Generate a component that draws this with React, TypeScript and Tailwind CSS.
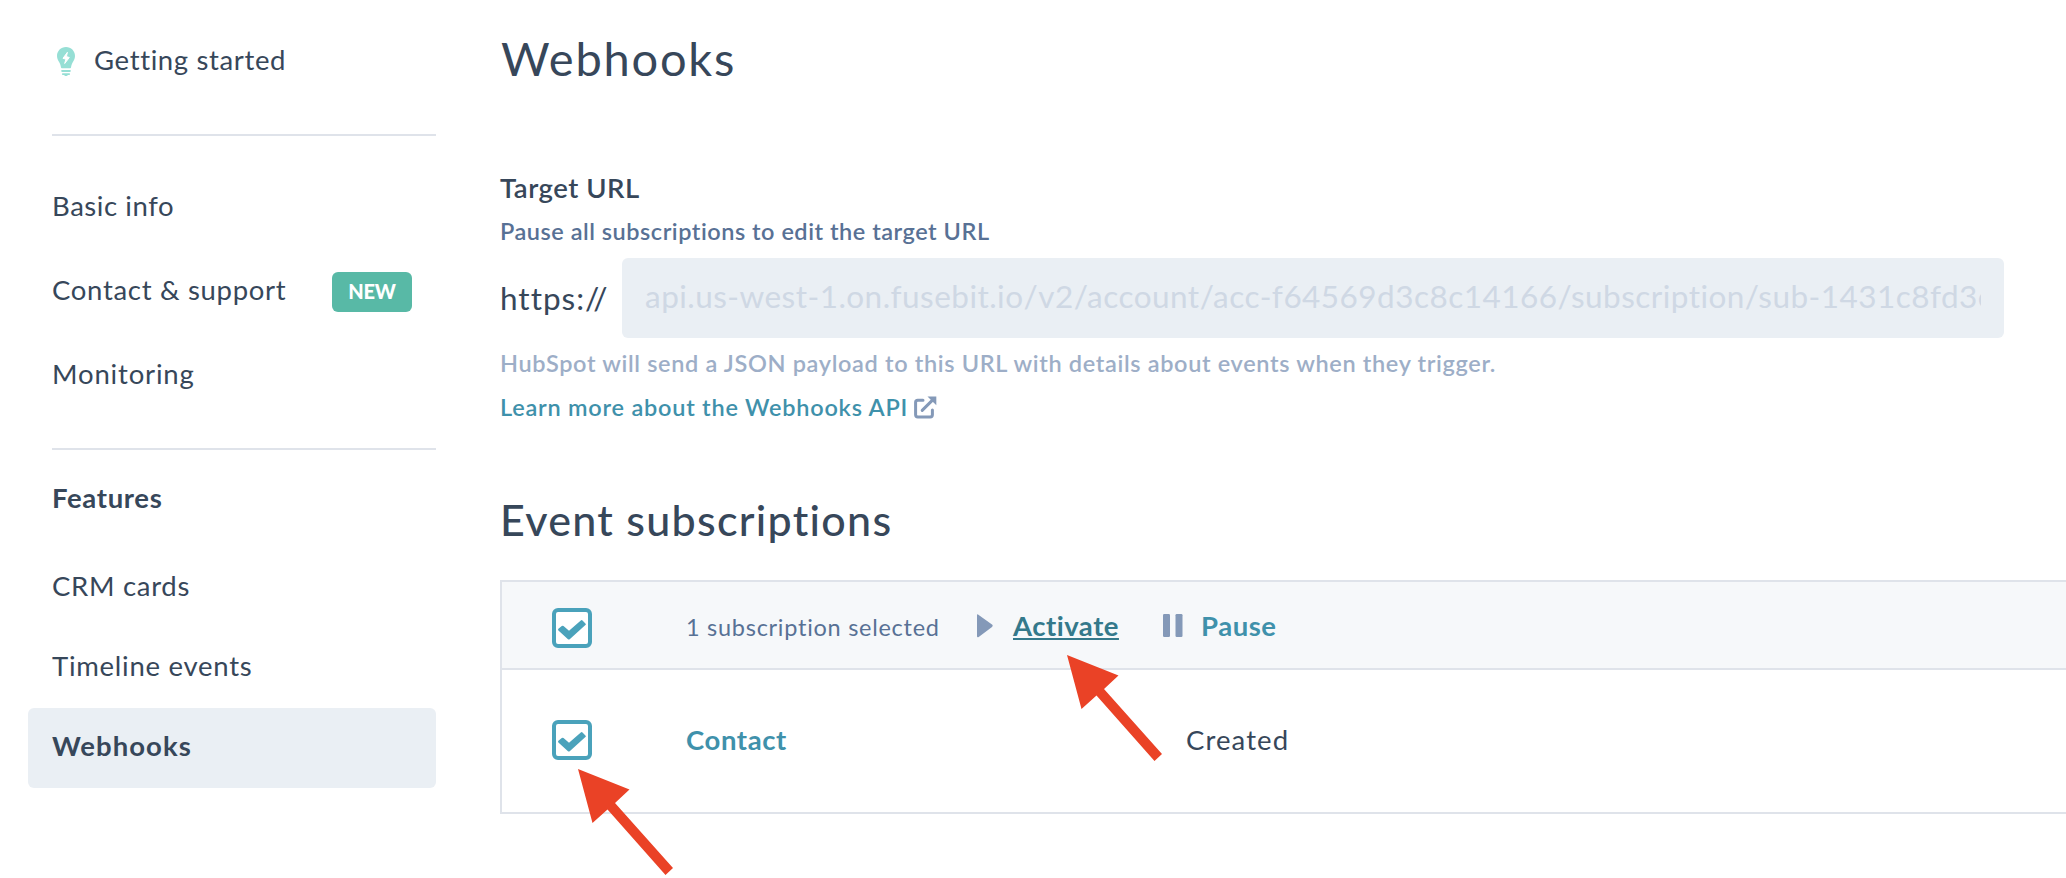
import type { ReactNode } from "react";

function BulbIcon() {
  return (
    <svg width="20" height="30" viewBox="0 0 20 30" className="shrink-0">
      <path d="M10 0C4.900 0 1 3.900 1 8.900c0 2.900 1.400 4.600 2.500 6.900.9 1.900 1.300 3.500 1.500 4.700.1.500.4.800.9.800h8.200c.5 0 .8-.3.9-.8.2-1.200.6-2.800 1.500-4.700C17.600 13.500 19 11.800 19 8.900 19 3.900 15.100 0 10 0Z" fill="#96dfd5" />
      <path d="M11.400 5.300 7 11.300l2.900.9-1.200 4.300 4.600-6-2.900-.9z" fill="#fff" stroke="#fff" strokeWidth="1" strokeLinejoin="round" />
      <rect x="5.200" y="23" width="9.600" height="1.900" rx=".8" fill="#96dfd5" />
      <path d="M6.600 26.200h6.800c.8 0 .8 1.700 0 1.700h-1.600c-.3 1.400-3.300 1.400-3.600 0H6.600c-.8 0-.8-1.700 0-1.700Z" fill="#96dfd5" />
    </svg>
  );
}

function ExternalIcon() {
  return (
    <svg width="23" height="23" viewBox="0 0 23 23" className="shrink-0" fill="none" stroke="#8499b8">
      <path d="M9 4.200H3.800C2.500 4.200 1.600 5 1.600 6.300v12.500c0 1.300.9 2.100 2.200 2.100h12.500c1.300 0 2.100-.8 2.100-2.100V14" strokeWidth="3" strokeLinecap="round" />
      <path d="M8.200 14.400 19 3.600" strokeWidth="3" strokeLinecap="round" />
      <path d="M13.500 0.500h8.800v8.800z" fill="#8499b8" stroke="none" />
    </svg>
  );
}

function Checkbox() {
  return (
    <span className="flex size-10 items-center justify-center rounded-[6px] border-4 border-[#4aa2bb] bg-white">
      <svg width="28" height="20" viewBox="0 0 28 20" className="mt-[3px]">
        <path d="M.4 8.800 3.800 6.100q.9-.7 1.700 0l5.500 4.600L22.800.5q.9-.8 1.700 0l2.900 2.900q.9.900 0 1.700L11.700 19.200q-.9.800-1.700 0L.4 10.400q-.7-.8 0-1.600Z" fill="#4aa2bb" />
      </svg>
    </span>
  );
}

function Arrow() {
  return (
    <svg width="96" height="108" viewBox="0 0 96 108" className="block">
      <path d="M0 0 51.500 20.500 37 34 95 99 87.500 106 29.500 40.500 14.500 54Z" fill="#ea4226" />
    </svg>
  );
}

function NavItem({ children, tracking }: { children: ReactNode; tracking: string }) {
  return <a className={`flex h-[84px] items-center pl-6 ${tracking}`}>{children}</a>;
}

export default function App() {
  return (
    <div className="relative flex h-[878px] w-[2066px] overflow-hidden bg-white font-['Lato',sans-serif] text-[27.5px] leading-[40px] whitespace-nowrap text-[#37475a]">
      <nav className="flex w-[436px] shrink-0 flex-col pl-7">
        <a className="mt-[40px] flex h-10 items-center pl-[28px] tracking-[0.64px]">
          <span className="mt-[4px] flex">
            <BulbIcon />
          </span>
          <span className="ml-[18px]">Getting started</span>
        </a>
        <hr className="mt-[54px] ml-6 border-t-2 border-[#dfe3ea]" />
        <div className="mt-[28px] flex flex-col">
          <NavItem tracking="tracking-[0.57px]">Basic info</NavItem>
          <NavItem tracking="tracking-[0.69px]">
            <span className="w-[280px]">Contact &amp; support</span>
            <span className="mt-[4px] flex h-10 w-20 items-center justify-center rounded-[6px] bg-[#58b9a6] pb-[2px] text-[20px] font-black tracking-[-0.2px] text-white">
              NEW
            </span>
          </NavItem>
          <NavItem tracking="tracking-[0.84px]">Monitoring</NavItem>
        </div>
        <hr className="mt-[32px] ml-6 border-t-2 border-[#dfe3ea]" />
        <h3 className="mt-[28px] ml-6 font-bold tracking-[0.66px]">Features</h3>
        <div className="mt-[30px] flex flex-col">
          <a className="flex h-20 items-center pb-[5px] pl-6 tracking-[0.7px]">CRM cards</a>
          <a className="flex h-20 items-center pb-[5px] pl-6 tracking-[0.74px]">Timeline events</a>
          <a className="flex h-20 items-center rounded-[6px] bg-[#eaeff4] pb-[5px] pl-6 font-bold tracking-[1.05px]">
            Webhooks
          </a>
        </div>
      </nav>

      <main className="ml-16 flex min-w-0 flex-1 flex-col">
        <h1 className="mt-[30px] pl-px text-[47px] leading-[56px] tracking-[1.78px]">Webhooks</h1>
        <h4 className="mt-[82px] font-semibold tracking-[0.51px]">Target URL</h4>
        <p className="mt-[7px] text-[23.5px] leading-8 font-semibold tracking-[0.52px] text-[#587195]">
          Pause all subscriptions to edit the target URL
        </p>
        <div className="mt-[11px] flex h-20 items-center text-[31.5px] leading-[80px]">
          <span className="w-[122px] tracking-[1px]">https://</span>
          <div className="h-20 w-[1382px] rounded-[6px] bg-[#eaeff4] px-[23px]">
            <div className="overflow-hidden leading-[76px] tracking-[0.47px] text-[#cfd8e4]">
              api.us-west-1.on.fusebit.io/v2/account/acc-f64569d3c8c14166/subscription/sub-1431c8fd3c
            </div>
          </div>
        </div>
        <p className="mt-[9px] text-[23.5px] leading-8 font-semibold tracking-[0.655px] text-[#9daec7]">
          HubSpot will send a JSON payload to this URL with details about events when they trigger.
        </p>
        <a className="mt-3 flex items-start text-[23.5px] leading-8 font-semibold tracking-[0.77px] text-[#3f91ab]">
          Learn more about the Webhooks API
          <span className="mt-[5px] ml-[6px] flex">
            <ExternalIcon />
          </span>
        </a>
        <h2 className="mt-[71px] text-[43px] leading-[52px] font-medium tracking-[1.28px]">Event subscriptions</h2>

        <section className="mt-[34px] flex h-[234px] flex-col border-2 border-r-0 border-[#dfe3ea]">
          <div className="flex h-[88px] items-center border-b-2 border-[#dfe3ea] bg-[#f6f8fa] pl-[50px]">
            <span className="mt-[6px]">
              <Checkbox />
            </span>
            <span className="mt-1 ml-[94px] w-[291px] text-[23.5px] tracking-[0.73px] text-[#587195]">
              1 subscription selected
            </span>
            <svg width="16" height="24" viewBox="0 0 16 24" className="mt-px">
              <path d="M0 1.500Q0-.4 1.700.9L15 10.600q1.400 1.200 0 2.300L1.700 22.900Q0 23.900 0 22Z" fill="#8499b8" />
            </svg>
            <span className="mt-[2px] ml-[20px] w-[150px]">
              <a className="font-bold tracking-[0.5px] text-[#34798b] underline decoration-2 underline-offset-[2px]">
                Activate
              </a>
            </span>
            <svg width="20" height="24" viewBox="0 0 20 24" fill="#8499b8" className="mt-px">
              <rect width="7" height="23" rx="1.200" />
              <rect x="12.500" width="7" height="23" rx="1.200" />
            </svg>
            <a className="mt-[2px] ml-[18px] font-bold tracking-[0.55px] text-[#3f91ab]">Pause</a>
          </div>
          <div className="flex flex-1 items-center pb-[2px] pl-[50px]">
            <Checkbox />
            <a className="ml-[94px] w-[500px] font-bold tracking-[0.6px] text-[#3f91ab]">Contact</a>
            <span className="tracking-[1.1px]">Created</span>
          </div>
        </section>
      </main>

      <div className="absolute top-[655px] left-[1067px]">
        <Arrow />
      </div>
      <div className="absolute top-[769px] left-[578px]">
        <Arrow />
      </div>
    </div>
  );
}
